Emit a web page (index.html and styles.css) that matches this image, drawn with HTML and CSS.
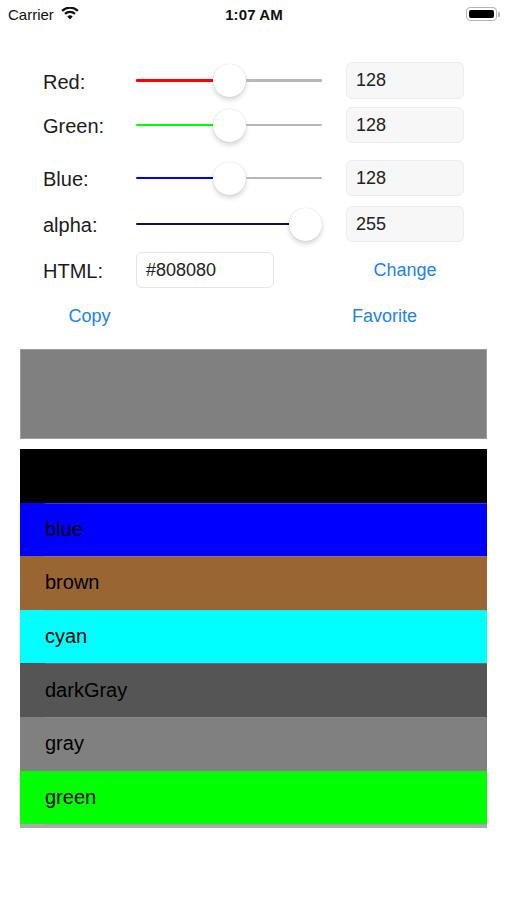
FILE: index.html
```html
<!DOCTYPE html>
<html>
<head>
<meta charset="utf-8">
<link rel="stylesheet" href="styles.css">
</head>
<body>
<div class="status">
  <div class="status-left">
    <span class="carrier">Carrier</span>
    <svg class="wifi" width="18" height="13" viewBox="0 0 18 13">
      <path d="M9 12.6 L6.3 9.5 A4 4 0 0 1 11.7 9.5 Z" fill="#111"/>
      <path d="M4 6.9 A7.2 7.2 0 0 1 14 6.9" stroke="#111" stroke-width="2.2" fill="none"/>
      <path d="M1.1 3.9 A11.2 11.2 0 0 1 16.9 3.9" stroke="#111" stroke-width="2.2" fill="none"/>
    </svg>
  </div>
  <div class="time">1:07 AM</div>
  <div class="status-right">
    <div class="battery"><div class="battery-fill"></div></div>
    <div class="battery-nub"></div>
  </div>
</div>

<div class="controls">
  <div class="row first">
    <div class="label">Red:</div>
    <div class="slider">
      <div class="fill red" style="width:76.8px"></div>
      <div class="thumb"></div>
      <div class="rest"></div>
    </div>
    <div class="field num">128</div>
  </div>
  <div class="row gap-s">
    <div class="label">Green:</div>
    <div class="slider">
      <div class="fill green" style="width:76.8px"></div>
      <div class="thumb"></div>
      <div class="rest"></div>
    </div>
    <div class="field num">128</div>
  </div>
  <div class="row gap-l">
    <div class="label">Blue:</div>
    <div class="slider">
      <div class="fill blue" style="width:76.8px"></div>
      <div class="thumb"></div>
      <div class="rest"></div>
    </div>
    <div class="field num">128</div>
  </div>
  <div class="row gap-m">
    <div class="label">alpha:</div>
    <div class="slider">
      <div class="fill alpha" style="width:153px"></div>
      <div class="thumb"></div>
      <div class="rest"></div>
    </div>
    <div class="field num">255</div>
  </div>
  <div class="row gap-m">
    <div class="label">HTML:</div>
    <div class="html-cell"><div class="field hex">#808080</div></div>
    <div class="btn-cell"><span class="link">Change</span></div>
  </div>
  <div class="row actions">
    <div class="copy-cell"><span class="link">Copy</span></div>
    <div class="fav-cell"><span class="link">Favorite</span></div>
  </div>
</div>

<div class="preview"></div>

<div class="list">
  <div class="item" style="background:#000000"><span></span></div>
  <div class="item" style="background:#0000ff"><span>blue</span></div>
  <div class="item" style="background:#996633"><span>brown</span></div>
  <div class="item" style="background:#00ffff"><span>cyan</span></div>
  <div class="item" style="background:#555555"><span>darkGray</span></div>
  <div class="item" style="background:#808080"><span>gray</span></div>
  <div class="item" style="background:#00ff00"><span>green</span></div>
  <div class="item" style="background:#aaaaaa"></div>
</div>
</body>
</html>
```

FILE: styles.css
```css
* { box-sizing: border-box; }
html, body { margin: 0; padding: 0; background: #fff; }
body {
  width: 507px;
  height: 900px;
  font-family: "Liberation Sans", Arial, sans-serif;
  color: #1c1c1c;
  overflow: hidden;
}

.status {
  height: 28px;
  display: flex;
  align-items: center;
  justify-content: space-between;
  padding: 0 7px 0 8px;
}
.status-left { display: flex; align-items: center; gap: 7px; width: 120px; }
.carrier { font-size: 15px; color: #111; }
.wifi { display: block; margin-top: -1px; }
.time {
  font-size: 15px;
  font-weight: bold;
  color: #111;
  letter-spacing: 0.1px;
}
.status-right { display: flex; align-items: center; justify-content: flex-end; width: 120px; }
.battery {
  width: 31px;
  height: 14px;
  border: 1px solid #b5b5b5;
  border-radius: 4px;
  padding: 2px;
}
.battery-fill { width: 100%; height: 100%; background: #000; border-radius: 2px; }
.battery-nub { width: 2px; height: 5px; background: #b5b5b5; border-radius: 0 1px 1px 0; margin-left: 1px; }

.controls { padding-left: 43px; margin-top: 34px; }
.row {
  display: grid;
  grid-template-columns: 93px 186px 142px;
  align-items: center;
  height: 36px;
}
.row.first { height: 37px; }
.row.gap-s { margin-top: 8px; }
.row.gap-l { margin-top: 17px; }
.row.gap-m { margin-top: 10px; }

.label { font-size: 20px; color: #1c1c1c; padding-top: 3px; }

.slider { display: flex; align-items: center; height: 36px; }
.fill { height: 2.5px; border-radius: 1px 0 0 1px; }
.fill.red { background: #ff0000; }
.fill.green { background: #00ff00; }
.fill.blue { background: #0000ff; }
.fill.alpha { background: #14103c; }
.rest { flex: 1; height: 2.5px; background: #b8b8b8; border-radius: 0 1px 1px 0; }
.thumb {
  width: 33px;
  height: 33px;
  flex: none;
  border-radius: 50%;
  background: #fff;
  box-shadow: 0 3px 5px rgba(0,0,0,0.16), 0 0 1px rgba(0,0,0,0.2);
}

.field {
  height: 100%;
  display: flex;
  align-items: center;
  padding-left: 9px;
  font-size: 18px;
  color: #222;
  border-radius: 6px;
}
.field.num {
  width: 118px;
  justify-self: end;
  background: #f7f7f7;
  border: 1px solid #ededed;
}
.html-cell { height: 36px; }
.field.hex {
  width: 138px;
  background: #fff;
  border: 1px solid #e6e6e6;
}
.btn-cell { display: flex; justify-content: center; padding-left: 24px; }
.link { font-size: 18px; color: #1a84f6; }

.row.actions { margin-top: 10px; }
.copy-cell { display: flex; justify-content: center; }
.fav-cell { grid-column: 3; padding-left: 30px; }

.preview {
  margin: 15px 0 0 20px;
  width: 467px;
  height: 90px;
  background: #808080;
  border: 1px solid #9d9d9d;
}

.list {
  margin: 10px 0 0 20px;
  width: 467px;
  height: 379px;
  overflow: hidden;
}
.item {
  height: 53.6px;
  display: flex;
  align-items: center;
  padding-left: 25px;
  font-size: 20px;
  color: #000;
  position: relative;
}
.item + .item::before {
  content: "";
  position: absolute;
  top: 0;
  left: 25px;
  right: 0;
  height: 1px;
  background: rgba(150,150,170,0.35);
}
```
